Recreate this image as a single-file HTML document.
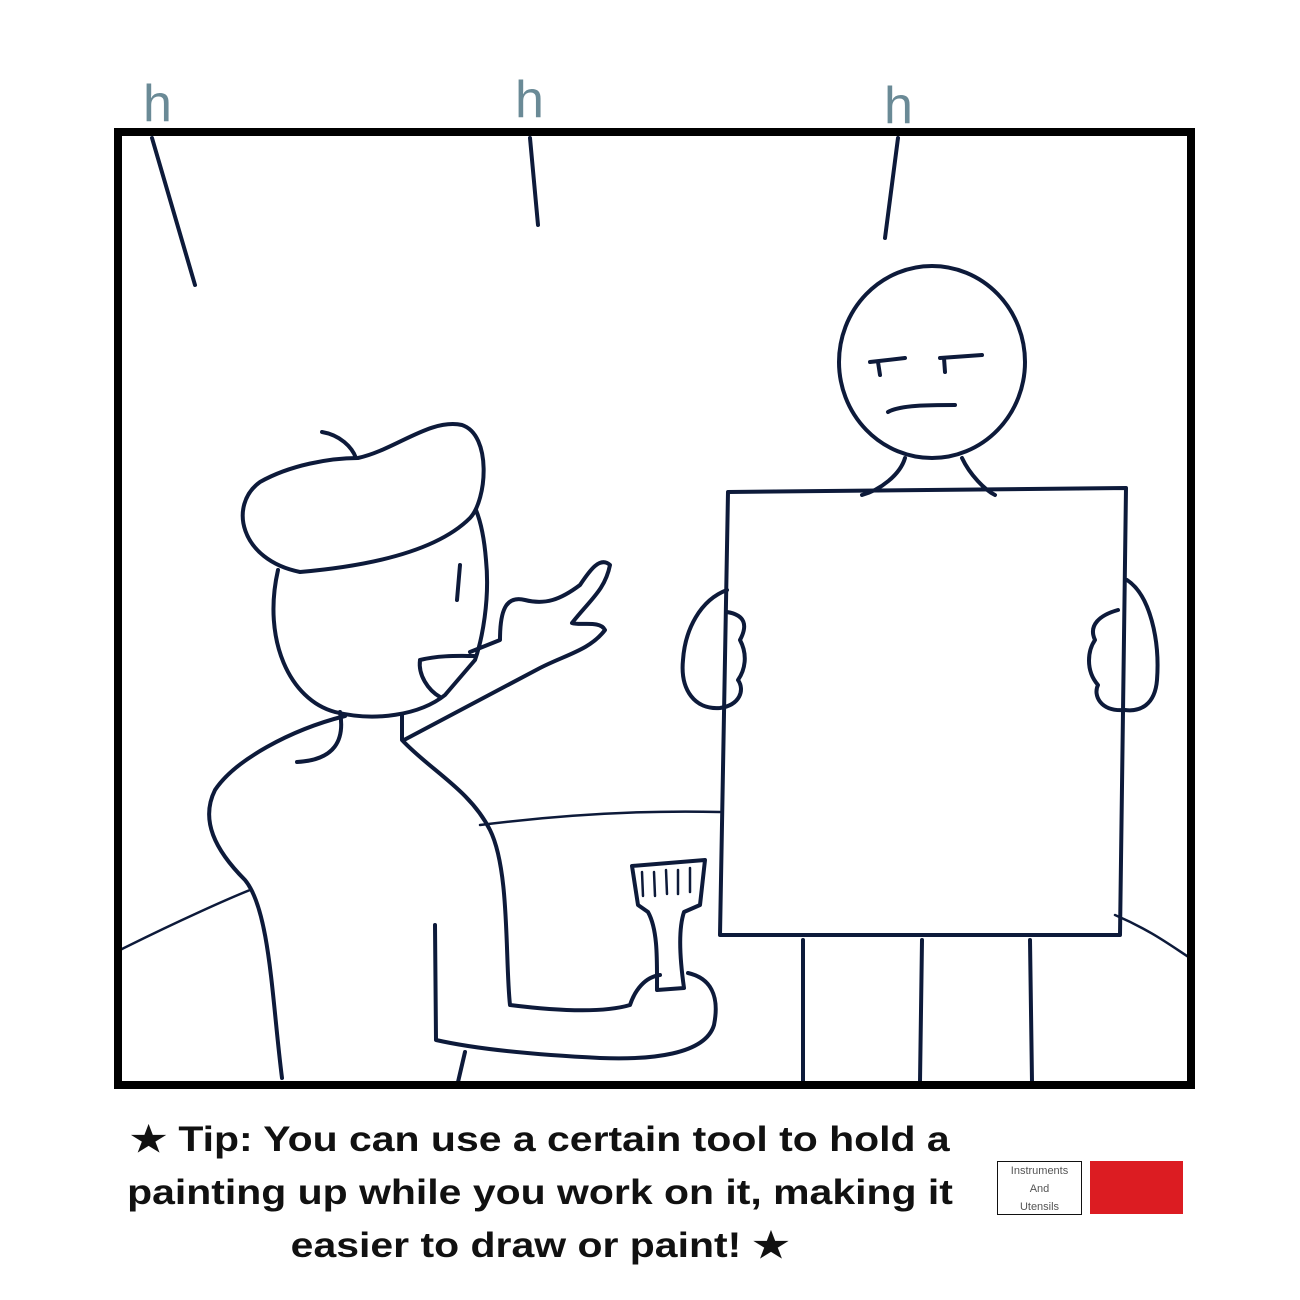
<!DOCTYPE html>
<html><head><meta charset="utf-8"><style>
html,body{margin:0;padding:0;background:#fff;width:1300px;height:1300px;overflow:hidden;position:relative}
.h{position:absolute;font-family:"Liberation Sans",sans-serif;font-size:52px;color:#6a8a96;line-height:1}
.cap{position:absolute;left:100px;width:880px;text-align:center;font-family:"Liberation Sans",sans-serif;font-weight:bold;font-size:35px;color:#111;line-height:53px;top:1113px;transform:scaleX(1.17);transform-origin:440px 0}
.lab{position:absolute;left:997px;top:1161px;width:83px;height:52px;border:1px solid #111;font-family:"Liberation Sans",sans-serif;font-size:11px;color:#555;text-align:center;line-height:18px}
.red{position:absolute;left:1090px;top:1161px;width:93px;height:53px;background:#dc1c22}
</style></head><body>
<div class="h" style="left:143px;top:78px">h</div>
<div class="h" style="left:515px;top:74px">h</div>
<div class="h" style="left:884px;top:80px">h</div>
<svg width="1300" height="1300" style="position:absolute;left:0;top:0" fill="none" stroke="#0d1a3a" stroke-width="4" stroke-linecap="round" stroke-linejoin="round">
<path d="M152,138 L195,285 M530,138 L538,225 M898,138 L885,238"/>
<path stroke-width="2.5" d="M120,950 C180,920 230,898 250,890 M480,825 C560,815 640,810 720,812 M1115,915 C1150,930 1170,945 1190,958"/>
<path d="M300,572 C240,560 228,505 260,482 C290,465 330,458 358,458 C395,450 430,418 462,425 C492,435 487,500 470,518 C440,548 380,565 300,572 Z"/>
<path d="M322,432 C340,435 352,447 356,458"/>
<path d="M278,570 C262,640 290,700 335,712 C375,722 420,715 445,695 L475,660 C482,640 490,600 486,560 C484,535 480,520 476,510"/>
<path d="M460,565 L457,600"/>
<path d="M420,660 C440,655 460,656 474,656 M420,660 C418,675 428,690 440,697"/>
<path d="M404,740 L540,668 C565,655 590,650 605,630 C600,620 580,626 572,623 C590,600 605,590 610,565 C600,556 590,570 580,585 C560,600 545,605 525,600 C505,595 500,612 500,640 L470,652"/>
<path d="M340,712 C345,740 335,760 297,762"/>
<path d="M345,716 C290,730 235,760 215,790 C200,820 215,850 245,880 C270,910 272,1000 282,1078"/>
<path d="M402,715 L402,740 C430,770 470,790 490,830 C510,870 505,960 510,1005 C550,1010 600,1014 630,1005 C635,990 645,977 660,975 M688,973 C710,978 720,995 714,1025 C705,1055 650,1060 600,1058 C540,1055 480,1050 436,1040 L435,925 M465,1052 L458,1082"/>
<path d="M632,866 L705,860 L700,905 L684,912 C678,930 680,960 684,988 L657,990 C657,960 658,930 648,912 L638,905 Z"/>
<path stroke-width="2.5" d="M642,872 L643,896 M654,872 L655,896 M666,870 L667,894 M678,870 L678,894 M690,868 L690,892"/>
<ellipse cx="932" cy="362" rx="93" ry="96"/>
<path d="M870,362 L905,358 M878,362 L880,375 M940,358 L982,355 M944,358 L945,372 M888,412 C900,405 930,405 955,405"/>
<path d="M905,458 C900,475 880,490 862,495 M962,458 C970,475 985,490 995,495"/>
<path d="M728,492 L1126,488 L1120,935 L720,935 Z"/>
<path d="M727,590 C700,600 685,630 683,660 C680,690 695,710 720,708 C740,705 745,690 738,680 C745,670 748,655 740,640 C748,625 745,615 727,612"/>
<path d="M1127,580 C1150,595 1160,640 1157,680 C1155,705 1140,712 1125,710 C1100,712 1093,695 1098,685 C1085,670 1088,650 1095,640 C1088,625 1100,615 1118,610"/>
<path d="M803,940 L803,1082 M922,940 L920,1082 M1030,940 L1032,1082"/>
<rect x="118" y="132" width="1073" height="953" stroke="#000" stroke-width="8" stroke-linejoin="miter"/>
</svg>
<div class="cap">★ Tip: You can use a certain tool to hold a<br>painting up while you work on it, making it<br>easier to draw or paint! ★</div>
<div class="lab">Instruments<br>And<br>Utensils</div>
<div class="red"></div>
</body></html>
